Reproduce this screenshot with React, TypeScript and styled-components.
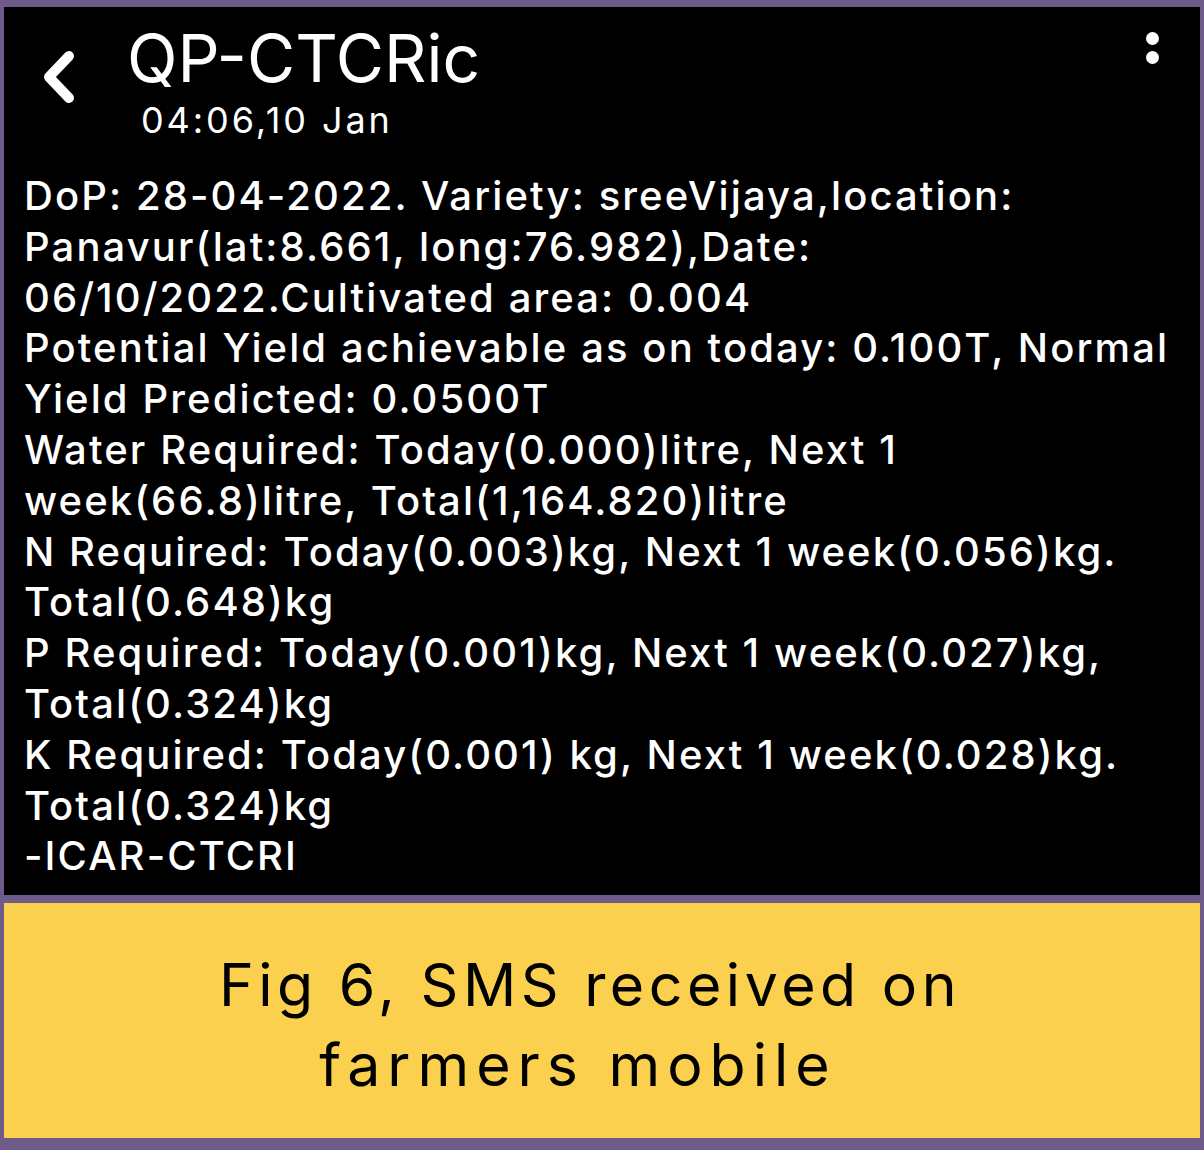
import styled, { createGlobalStyle } from 'styled-components';

const GlobalStyle = createGlobalStyle`
  html, body {
    margin: 0;
    padding: 0;
    background: #6f5b8a;
  }
  body {
    font-family: Inter, "Noto Sans", sans-serif;
  }
`;

const Frame = styled.div`
  width: 1204px;
  height: 1150px;
  box-sizing: border-box;
  padding: 7px 4px 12px 4px;
  display: flex;
  flex-direction: column;
  gap: 8px;
  background: #6f5b8a;
`;

const Phone = styled.div`
  height: 888px;
  background: #000;
  color: #fff;
  box-sizing: border-box;
  display: flex;
  flex-direction: column;
`;

const Header = styled.div`
  display: flex;
  align-items: flex-start;
  height: 140px;
  position: relative;
`;

const BackButton = styled.div`
  width: 38px;
  height: 58px;
  margin: 41px 0 0 34px;
`;

const TitleBlock = styled.div`
  display: flex;
  flex-direction: column;
  margin-left: 51px;
`;

const Title = styled.div`
  font-size: 66px;
  font-weight: 400;
  line-height: 1;
  margin-top: 18px;
`;

const Stamp = styled.div`
  font-size: 36px;
  font-weight: 400;
  letter-spacing: 2.9px;
  line-height: 1;
  margin: 11px 0 0 14px;
`;

const Kebab = styled.div`
  position: absolute;
  right: 41px;
  top: 25px;
  display: flex;
  flex-direction: column;
  gap: 6px;
`;

const Dot = styled.span`
  width: 13px;
  height: 13px;
  border-radius: 50%;
  background: #fff;
`;

const Message = styled.div`
  padding: 24px 0 0 20px;
  font-size: 40px;
  font-weight: 500;
  letter-spacing: 2.1px;
  line-height: 50.8px;
`;

const Line = styled.div`
  white-space: nowrap;
`;

const Caption = styled.div`
  flex: 1;
  background: #fbd04f;
  color: #000;
  display: flex;
  flex-direction: column;
  align-items: center;
  justify-content: center;
  font-size: 59px;
  font-weight: 400;
  line-height: 80px;
  padding: 8px 24px 0 0;
`;

const CaptionLine = styled.div<{ $spacing: number; $nudge?: number }>`
  letter-spacing: ${p => p.$spacing}px;
  margin-right: ${p => p.$nudge ?? 0}px;
  white-space: nowrap;
`;

const lines = [
  'DoP: 28-04-2022. Variety: sreeVijaya,location:',
  'Panavur(lat:8.661, long:76.982),Date:',
  '06/10/2022.Cultivated area: 0.004',
  'Potential Yield achievable as on today: 0.100T, Normal',
  'Yield Predicted: 0.0500T',
  'Water Required: Today(0.000)litre, Next 1',
  'week(66.8)litre, Total(1,164.820)litre',
  'N Required: Today(0.003)kg, Next 1 week(0.056)kg.',
  'Total(0.648)kg',
  'P Required: Today(0.001)kg, Next 1 week(0.027)kg,',
  'Total(0.324)kg',
  'K Required: Today(0.001) kg, Next 1 week(0.028)kg.',
  'Total(0.324)kg',
  '-ICAR-CTCRI',
];

export default function App() {
  return (
    <>
      <GlobalStyle />
      <Frame>
        <Phone>
          <Header>
            <BackButton>
              <svg width="38" height="58" viewBox="0 0 38 58">
                <path
                  d="M31 8 L11 29 L31 50"
                  fill="none"
                  stroke="#fff"
                  strokeWidth="10"
                  strokeLinecap="round"
                  strokeLinejoin="round"
                />
              </svg>
            </BackButton>
            <TitleBlock>
              <Title>QP-CTCRic</Title>
              <Stamp>04:06,10 Jan</Stamp>
            </TitleBlock>
            <Kebab>
              <Dot />
              <Dot />
            </Kebab>
          </Header>
          <Message>
            {lines.map((l, i) => (
              <Line key={i}>{l}</Line>
            ))}
          </Message>
        </Phone>
        <Caption>
          <CaptionLine $spacing={4.5}>Fig 6, SMS received on</CaptionLine>
          <CaptionLine $spacing={7} $nudge={24}>farmers mobile</CaptionLine>
        </Caption>
      </Frame>
    </>
  );
}
